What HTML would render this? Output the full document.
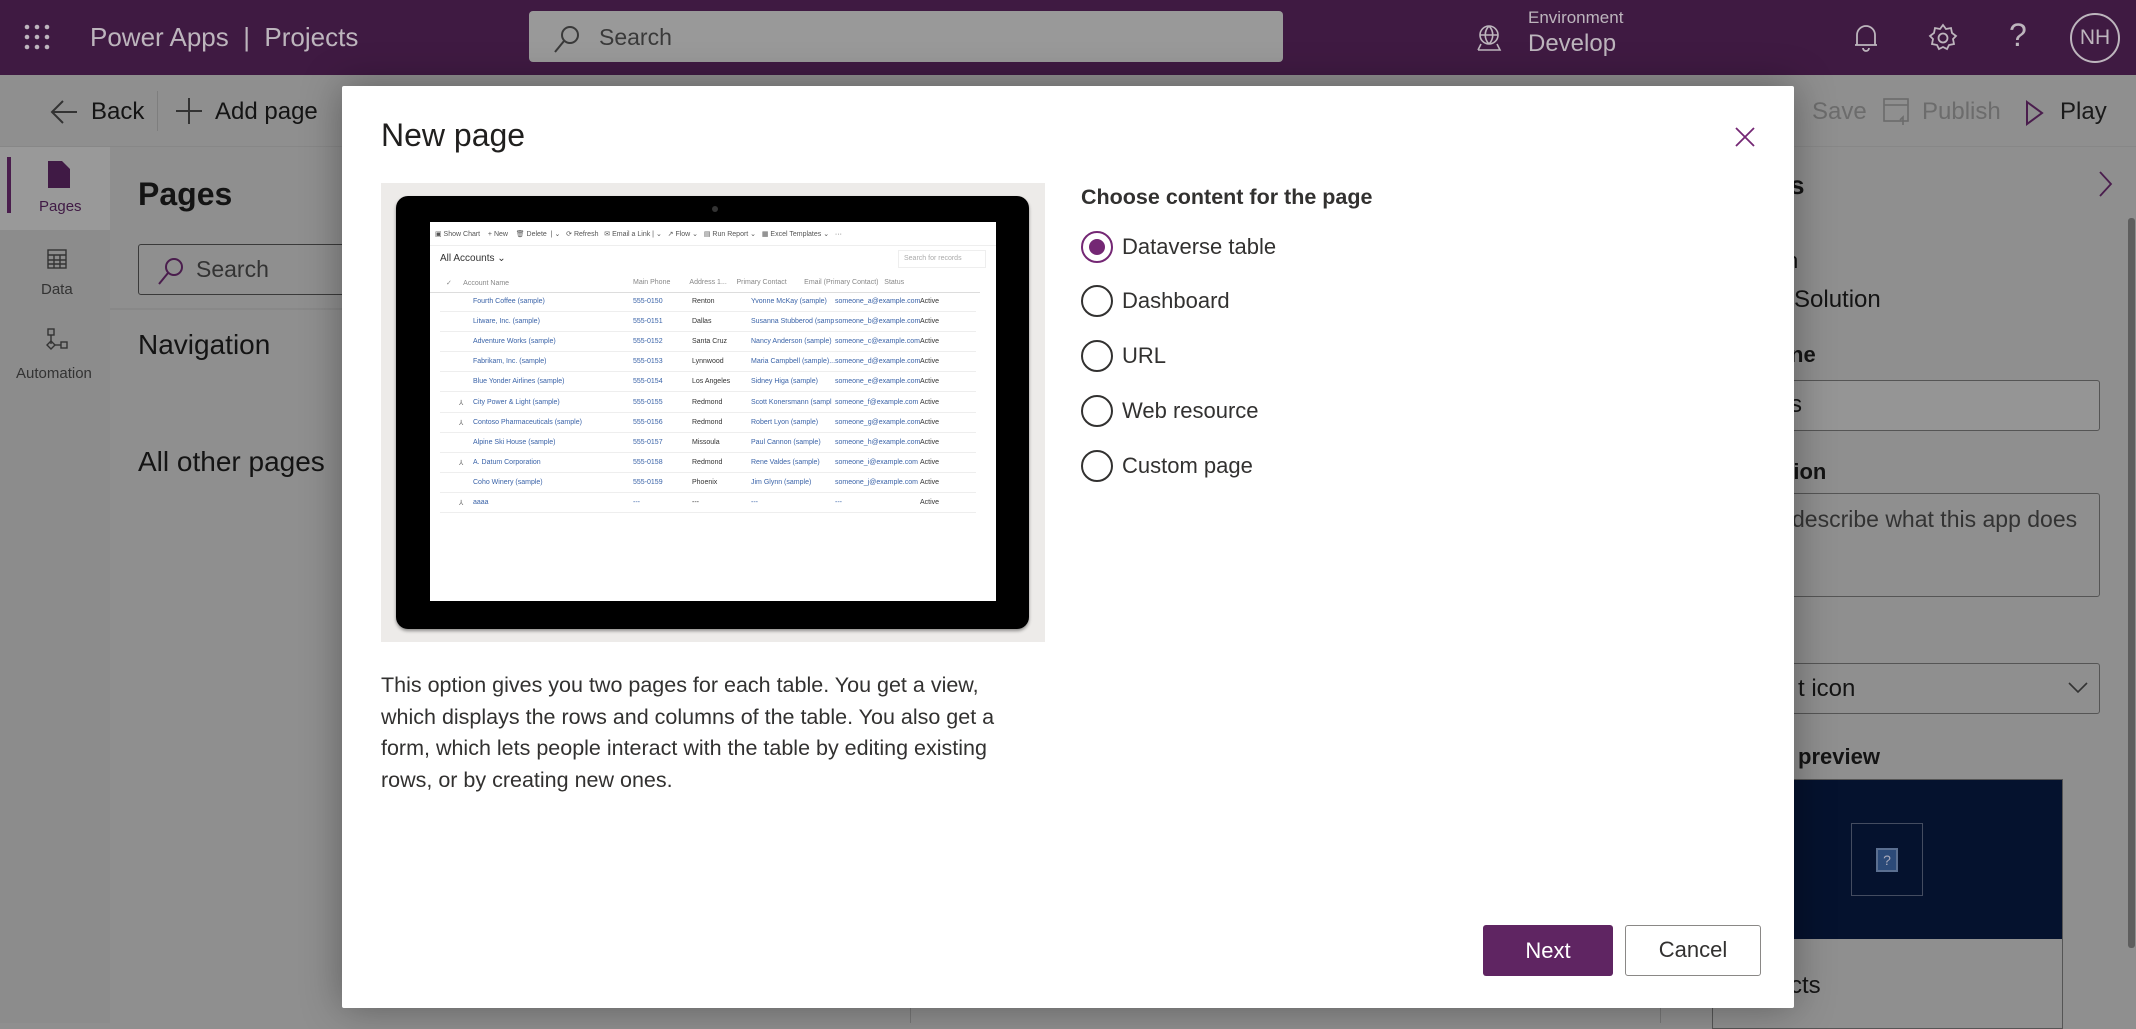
<!DOCTYPE html>
<html><head><meta charset="utf-8">
<style>
*{margin:0;padding:0;box-sizing:border-box}
body{width:2136px;height:1023px;overflow:hidden;position:relative;background:#8f8f8f;font-family:"Liberation Sans",sans-serif;color:#141414}
.a{position:absolute;white-space:nowrap}
.top{position:absolute;left:0;top:0;width:2136px;height:75px;background:#3f1a42;color:#bdb5bd}
.bar2{position:absolute;left:0;top:75px;width:2136px;height:72px;background:#8f8f8f;border-bottom:1px solid #878787}
.rail{position:absolute;left:0;top:147px;width:110px;height:876px;background:#8c8c8c}
.modal{position:absolute;left:342px;top:86px;width:1452px;height:922px;background:#fff;box-shadow:0 0 40px rgba(0,0,0,.35);border-radius:2px}
.radio{position:absolute;left:1081px;width:32px;height:32px;border:2px solid #323130;border-radius:50%}
.rl{position:absolute;left:1122px;font-size:22px;color:#323130;white-space:nowrap}
.scr{position:absolute;font-size:7px;white-space:nowrap}
.lnk{color:#3a63a8}
</style></head><body>
<div class="top">
 <svg class="a" style="left:24px;top:24px" width="26" height="26" fill="#bdb5bd"><circle cx="3" cy="3" r="2.3"/><circle cx="13" cy="3" r="2.3"/><circle cx="23" cy="3" r="2.3"/><circle cx="3" cy="13" r="2.3"/><circle cx="13" cy="13" r="2.3"/><circle cx="23" cy="13" r="2.3"/><circle cx="3" cy="23" r="2.3"/><circle cx="13" cy="23" r="2.3"/><circle cx="23" cy="23" r="2.3"/></svg>
 <div class="a" style="left:90px;top:22px;font-size:26px">Power Apps &nbsp;|&nbsp; Projects</div>
 <div class="a" style="left:529px;top:11px;width:754px;height:51px;background:#999;border-radius:4px"></div>
 <svg class="a" style="left:553px;top:24px" width="28" height="30" fill="none" stroke="#3a3a3a" stroke-width="2"><circle cx="17" cy="11" r="8"/><path d="M11 17L2 28"/></svg>
 <div class="a" style="left:599px;top:24px;font-size:23px;color:#3a3a3a">Search</div>
 <svg class="a" style="left:1475px;top:24px" width="28" height="28" fill="none" stroke="#bdb5bd" stroke-width="1.6"><circle cx="14" cy="11" r="9"/><path d="M5 11h18M14 2c-5 5-5 13 0 18M14 2c5 5 5 13 0 18M3 26h22l-3-6M3 26l3-6"/></svg>
 <div class="a" style="left:1528px;top:8px;font-size:17px">Environment</div>
 <div class="a" style="left:1528px;top:30px;font-size:24px">Develop</div>
 <svg class="a" style="left:1853px;top:23px" width="26" height="30" fill="none" stroke="#bdb5bd" stroke-width="1.8"><path d="M4 22V12a9 9 0 0118 0v10zM2 22h22M10 25a3 3 0 006 0"/></svg>
 <svg class="a" style="left:1928px;top:23px" width="30" height="30" fill="none" stroke="#bdb5bd" stroke-width="1.8"><circle cx="15" cy="15" r="4.5"/><path d="M15 2l3 4 5-1 1 5 4 3-3 3 1 5-5 1-2 4-4-2-4 2-2-4-5-1 1-5-3-3 4-3 1-5 5 1z"/></svg>
 <div class="a" style="left:2009px;top:17px;font-size:32px">?</div>
 <div class="a" style="left:2070px;top:13px;width:50px;height:50px;border:2px solid #bdb5bd;border-radius:50%;text-align:center;line-height:46px;font-size:21px">NH</div>
</div>
<div class="bar2">
 <svg class="a" style="left:50px;top:24px" width="28" height="26" fill="none" stroke="#333" stroke-width="2"><path d="M27 13H2M13 2L2 13l11 11"/></svg>
 <div class="a" style="left:91px;top:23px;font-size:24px">Back</div>
 <div class="a" style="left:157px;top:16px;width:1px;height:40px;background:#7e7e7e"></div>
 <svg class="a" style="left:175px;top:22px" width="28" height="28" fill="none" stroke="#333" stroke-width="2"><path d="M14 1v26M1 14h26"/></svg>
 <div class="a" style="left:215px;top:23px;font-size:24px">Add page</div>
 <div class="a" style="left:1812px;top:23px;font-size:24px;color:#6c6c6c">Save</div>
 <svg class="a" style="left:1883px;top:23px" width="26" height="28" fill="none" stroke="#6c6c6c" stroke-width="1.6"><rect x="1" y="1" width="24" height="22"/><path d="M1 7h24M20 27v-8l-3 3"/></svg>
 <div class="a" style="left:1922px;top:23px;font-size:24px;color:#6c6c6c">Publish</div>
 <svg class="a" style="left:2025px;top:25px" width="20" height="26" fill="none" stroke="#4a1d4d" stroke-width="2"><path d="M2 2l15 11L2 24z"/></svg>
 <div class="a" style="left:2060px;top:23px;font-size:24px;color:#1a1a1a">Play</div>
</div>
<div class="rail">
 <div class="a" style="left:0;top:0;width:110px;height:83px;background:#999"></div>
 <div class="a" style="left:7px;top:10px;width:4px;height:56px;background:#4a1d4d"></div>
 <svg class="a" style="left:48px;top:14px" width="22" height="27"><path d="M0 0h14l8 8v19H0z" fill="#401a45"/></svg>
 <div class="a" style="left:39px;top:51px;font-size:15px;color:#401a45">Pages</div>
 <svg class="a" style="left:47px;top:102px" width="20" height="20" fill="none" stroke="#333" stroke-width="1.4"><rect x="1" y="1" width="18" height="18"/><path d="M1 6h18M1 11h18M1 15h18M7 6v13M13 6v13"/></svg>
 <div class="a" style="left:41px;top:134px;font-size:15px;color:#333">Data</div>
 <svg class="a" style="left:46px;top:181px" width="24" height="28" fill="none" stroke="#333" stroke-width="1.4"><rect x="2" y="1" width="6" height="6"/><path d="M5 7v9"/><path d="M5 13l4 4-4 4-4-4z"/><path d="M9 17h6"/><rect x="15" y="14" width="6" height="6"/></svg>
 <div class="a" style="left:16px;top:218px;font-size:15px;color:#333">Automation</div>
</div>
<div class="a" style="left:138px;top:176px;font-size:32px;font-weight:bold">Pages</div>
<div class="a" style="left:138px;top:244px;width:230px;height:51px;border:1.5px solid #3a3a3a;border-radius:3px"></div>
<svg class="a" style="left:157px;top:256px" width="28" height="30" fill="none" stroke="#4a1d4d" stroke-width="2"><circle cx="17" cy="11" r="8"/><path d="M11 17L2 28"/></svg>
<div class="a" style="left:196px;top:256px;font-size:23px;color:#333">Search</div>
<div class="a" style="left:110px;top:308px;width:240px;height:2px;background:#888"></div>
<div class="a" style="left:138px;top:329px;font-size:28px">Navigation</div>
<div class="a" style="left:138px;top:446px;font-size:28px">All other pages</div>
<div class="a" style="left:2098px;top:170px"><svg width="16" height="28" fill="none" stroke="#4a1d4d" stroke-width="1.8"><path d="M2 2l11 12L2 26"/></svg></div>
<div class="a" style="left:1790px;top:170px;font-size:26px;font-weight:bold">s</div>
<div class="a" style="left:1786px;top:248px;font-size:22px">n</div>
<div class="a" style="left:1794px;top:286px;font-size:24px">Solution</div>
<div class="a" style="left:1790px;top:342px;font-size:22px;font-weight:bold">ne</div>
<div class="a" style="left:1700px;top:380px;width:400px;height:51px;border:1.5px solid #555;border-radius:3px;background:#959595"></div>
<div class="a" style="left:1790px;top:391px;font-size:24px">s</div>
<div class="a" style="left:1786px;top:459px;font-size:22px;font-weight:bold">tion</div>
<div class="a" style="left:1700px;top:493px;width:400px;height:104px;border:1.5px solid #555;border-radius:3px"></div>
<div class="a" style="left:1792px;top:506px;font-size:23px;color:#333">describe what this app does</div>
<div class="a" style="left:1700px;top:663px;width:400px;height:51px;border:1.5px solid #555;border-radius:3px"></div>
<div class="a" style="left:1798px;top:675px;font-size:24px">t icon</div>
<svg class="a" style="left:2068px;top:681px" width="20" height="14" fill="none" stroke="#333" stroke-width="1.6"><path d="M1 2l9 9 9-9"/></svg>
<div class="a" style="left:1798px;top:744px;font-size:22px;font-weight:bold">preview</div>
<div class="a" style="left:1712px;top:779px;width:351px;height:250px;border:1.5px solid #555"></div>
<div class="a" style="left:1712px;top:780px;width:350px;height:159px;background:#05122e"></div>
<div class="a" style="left:1851px;top:823px;width:72px;height:73px;border:1px solid #444c60"></div>
<div class="a" style="left:1876px;top:848px;width:22px;height:24px;background:#2c4a78;border:2px solid #5b6f90;color:#aab;font-size:14px;text-align:center;line-height:20px">?</div>
<div class="a" style="left:1790px;top:972px;font-size:24px">cts</div>
<div class="a" style="left:2128px;top:218px;width:7px;height:730px;background:#5e5e5e;border-radius:3px"></div>
<div class="a" style="left:910px;top:1008px;width:1px;height:15px;background:#777"></div>
<div class="a" style="left:1660px;top:1008px;width:1px;height:15px;background:#777"></div>

<div class="modal"></div>
<div class="a" style="left:381px;top:117px;font-size:32px;color:#201f1e">New page</div>
<svg class="a" style="left:1735px;top:127px" width="20" height="20" fill="none" stroke="#742774" stroke-width="1.8"><path d="M1 1l18 18M19 1L1 19"/></svg>
<div class="a" style="left:381px;top:183px;width:664px;height:459px;background:#edebe9"></div>
<div class="a" style="left:396px;top:196px;width:633px;height:433px;background:#000;border-radius:12px;box-shadow:0 2px 3px rgba(0,0,0,.4)"></div>
<div class="a" style="left:712px;top:206px;width:6px;height:6px;border-radius:50%;background:#333"></div>
<div class="a" style="left:430px;top:222px;width:566px;height:379px;background:#fff"></div>
<div style="position:absolute;left:430px;top:222px;width:566px;height:379px;color:#555">
 <div class="scr" style="left:5px;top:8px">▣ Show Chart &nbsp;&nbsp; + New &nbsp;&nbsp; 🗑 Delete &nbsp;| ⌄ &nbsp; ⟳ Refresh &nbsp; ✉ Email a Link | ⌄ &nbsp; ↗ Flow ⌄ &nbsp; ▤ Run Report ⌄ &nbsp; ▦ Excel Templates ⌄ &nbsp; ···</div>
 <div class="a" style="left:0;top:23px;width:566px;height:1px;background:#eee"></div>
 <div class="scr" style="left:10px;top:31px;font-size:10px;color:#333">All Accounts ⌄</div>
 <div class="a" style="left:468px;top:28px;width:88px;height:18px;border:1px solid #eee"></div>
 <div class="scr" style="left:474px;top:33px;color:#aaa">Search for records</div>
 <div class="scr" style="left:16px;top:57px;color:#888">✓ &nbsp;&nbsp;&nbsp;&nbsp; Account Name</div>
 <div class="scr" style="left:203px;top:57px;color:#888">Main Phone &nbsp;&nbsp;&nbsp;&nbsp;&nbsp;&nbsp;&nbsp;&nbsp; Address 1... &nbsp;&nbsp;&nbsp; Primary Contact &nbsp;&nbsp;&nbsp;&nbsp;&nbsp;&nbsp;&nbsp; Email (Primary Contact) &nbsp; Status</div>
 <div class="a" style="left:0;top:70px;width:550px;height:1px;background:#ddd"></div>
</div>
<div id="rows"></div>
<div class="a" style="left:381px;top:670px;font-size:21.5px;line-height:31.5px;color:#323130;white-space:normal;width:630px">This option gives you two pages for each table. You get a view, which displays the rows and columns of the table. You also get a form, which lets people interact with the table by editing existing rows, or by creating new ones.</div>
<div class="a" style="left:1081px;top:185px;font-size:21.5px;font-weight:bold;color:#323130">Choose content for the page</div>
<div class="radio" style="top:231px;border-color:#742774"><div style="position:absolute;left:6px;top:6px;width:16px;height:16px;border-radius:50%;background:#742774"></div></div>
<div class="rl" style="top:234px">Dataverse table</div>
<div class="radio" style="top:285px"></div><div class="rl" style="top:288px">Dashboard</div>
<div class="radio" style="top:340px"></div><div class="rl" style="top:343px">URL</div>
<div class="radio" style="top:395px"></div><div class="rl" style="top:398px">Web resource</div>
<div class="radio" style="top:450px"></div><div class="rl" style="top:453px">Custom page</div>
<div class="a" style="left:1483px;top:925px;width:130px;height:51px;background:#5f2562;border-radius:3px;color:#fff;font-size:22px;text-align:center;line-height:51px">Next</div>
<div class="a" style="left:1625px;top:925px;width:136px;height:51px;background:#fff;border:1.5px solid #8a8886;border-radius:3px;color:#323130;font-size:22px;text-align:center;line-height:48px">Cancel</div>
<script>
var d=[["Fourth Coffee (sample)","555-0150","Renton","Yvonne McKay (sample)","someone_a@example.com",0],["Litware, Inc. (sample)","555-0151","Dallas","Susanna Stubberod (samp","someone_b@example.com",0],["Adventure Works (sample)","555-0152","Santa Cruz","Nancy Anderson (sample)","someone_c@example.com",0],["Fabrikam, Inc. (sample)","555-0153","Lynnwood","Maria Campbell (sample)...","someone_d@example.com",0],["Blue Yonder Airlines (sample)","555-0154","Los Angeles","Sidney Higa (sample)","someone_e@example.com",0],["City Power & Light (sample)","555-0155","Redmond","Scott Konersmann (sampl","someone_f@example.com",1],["Contoso Pharmaceuticals (sample)","555-0156","Redmond","Robert Lyon (sample)","someone_g@example.com",1],["Alpine Ski House (sample)","555-0157","Missoula","Paul Cannon (sample)","someone_h@example.com",0],["A. Datum Corporation","555-0158","Redmond","Rene Valdes (sample)","someone_i@example.com",1],["Coho Winery (sample)","555-0159","Phoenix","Jim Glynn (sample)","someone_j@example.com",0],["aaaa","---","---","---","---",1]];
var h="";d.forEach(function(r,i){var y=298+i*20.1;var s='style="top:'+y+'px;left:';
if(r[5])h+='<div class="scr" '+s+'459px;color:#666">⅄</div>';
h+='<div class="scr lnk" '+s+'473px">'+r[0]+'</div><div class="scr lnk" '+s+'633px">'+r[1]+'</div><div class="scr" '+s+'692px;color:#333">'+r[2]+'</div><div class="scr lnk" '+s+'751px">'+r[3]+'</div><div class="scr lnk" '+s+'835px">'+r[4]+'</div><div class="scr" '+s+'920px;color:#333">Active</div><div class="a" style="left:440px;top:'+(y+13)+'px;width:536px;height:1px;background:#eee"></div>';});
document.getElementById("rows").innerHTML=h;
</script>
</body></html>
